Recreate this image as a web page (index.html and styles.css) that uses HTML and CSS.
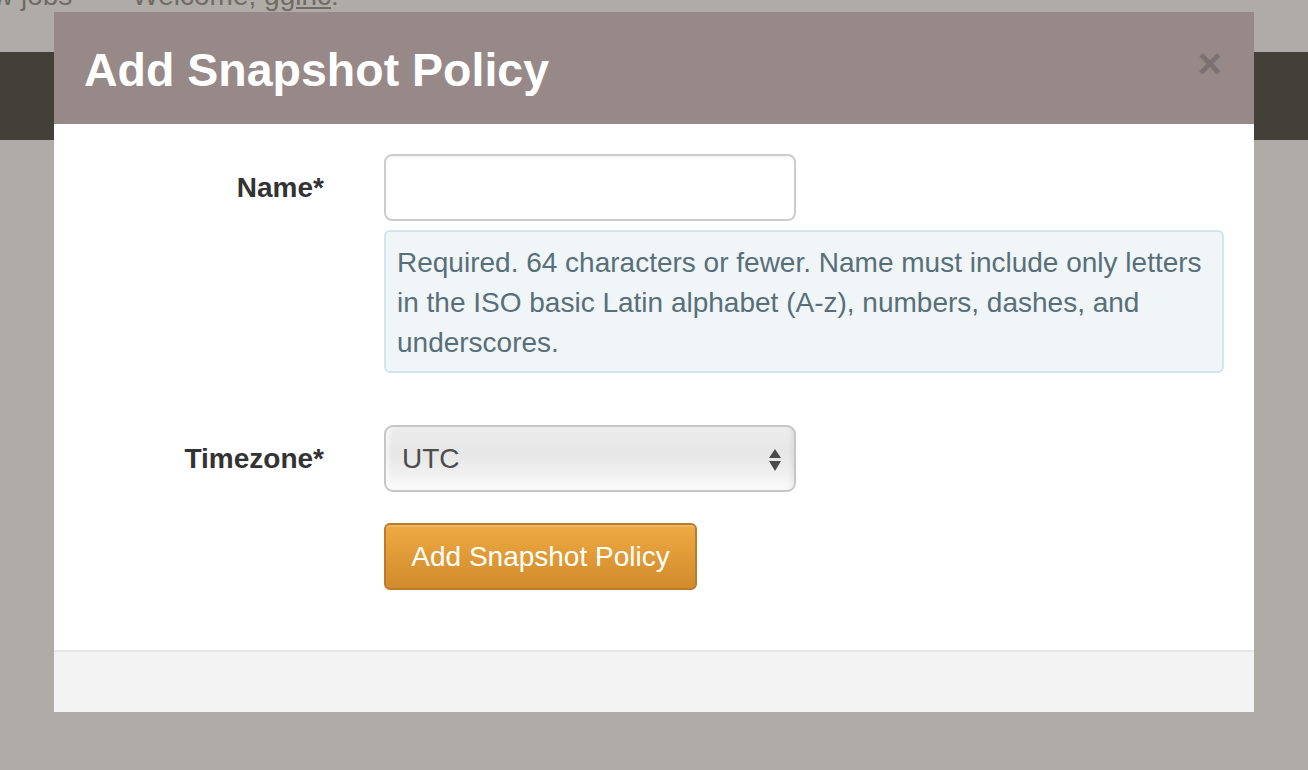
FILE: index.html
```html
<!DOCTYPE html>
<html>
<head>
<meta charset="utf-8">
<link rel="stylesheet" href="styles.css">
</head>
<body>
<div class="page">
  <div class="topline">
    <span class="jobs">View jobs</span>
    <span class="welcome">Welcome, <a class="user">gginc</a>!</span>
  </div>
  <div class="navbar"></div>
</div>
<div class="backdrop"></div>
<div class="modal">
  <div class="modal-header">
    <h3 class="modal-title">Add Snapshot Policy</h3>
    <span class="close">&times;</span>
  </div>
  <div class="modal-body">
    <div class="form-row">
      <label class="control-label">Name*</label>
      <div class="controls">
        <input class="text-input" type="text">
        <div class="help">Required. 64 characters or fewer. Name must include only letters in the ISO basic Latin alphabet (A-z), numbers, dashes, and underscores.</div>
      </div>
    </div>
    <div class="form-row tz-row">
      <label class="control-label">Timezone*</label>
      <div class="controls">
        <div class="select">
          <span class="select-value">UTC</span>
          <svg class="arrows" width="14" height="24" viewBox="0 0 14 24"><path d="M7 1 L13 10 L1 10 Z" fill="#4a4a4a"/><path d="M1 13 L13 13 L7 23 Z" fill="#4a4a4a"/></svg>
        </div>
        <button class="btn-add">Add Snapshot Policy</button>
      </div>
    </div>
  </div>
  <div class="modal-footer"></div>
</div>
</body>
</html>
```
FILE: styles.css
```css
html, body {
  margin: 0;
  padding: 0;
}
body {
  width: 1308px;
  height: 770px;
  overflow: hidden;
  background: #ffffff;
  font-family: "Liberation Sans", Arial, Helvetica, sans-serif;
  position: relative;
}
.page {
  height: 770px;
  background: #ffffff;
}
.topline {
  height: 70px;
  display: flex;
  font-size: 28px;
  line-height: 28px;
  color: #8c8882;
  margin-top: -18px;
  margin-left: -47px;
  white-space: nowrap;
}
.topline .jobs {
  margin-right: 60px;
}
.topline .user {
  color: #8c8882;
  text-decoration: underline;
}
.navbar {
  height: 88px;
  background: #383633;
}
.backdrop {
  position: absolute;
  inset: 0;
  background: rgba(80, 74, 66, 0.46);
}
.modal {
  position: absolute;
  left: 54px;
  top: 12px;
  width: 1200px;
  background: #ffffff;
}
.modal-header {
  height: 112px;
  background: #978988;
  display: flex;
  align-items: flex-start;
  justify-content: space-between;
  padding: 0 32px 0 30px;
  box-sizing: border-box;
}
.modal-title {
  margin: 0;
  margin-top: 28px;
  font-size: 46.5px;
  line-height: 60px;
  font-weight: bold;
  color: #ffffff;
}
.close {
  margin-top: 28px;
  font-size: 42px;
  line-height: 48px;
  font-weight: bold;
  color: #7c7171;
}
.modal-body {
  padding: 30px 30px 0 30px;
  height: 526px;
  box-sizing: border-box;
}
.form-row {
  display: flex;
}
.tz-row {
  margin-top: 52px;
}
.control-label {
  width: 240px;
  flex: none;
  text-align: right;
  font-size: 28px;
  font-weight: bold;
  color: #333333;
  line-height: 40px;
  padding-top: 14px;
  margin-right: 60px;
}
.controls {
  display: flex;
  flex-direction: column;
  align-items: flex-start;
  width: 840px;
}
.text-input {
  width: 412px;
  height: 67px;
  box-sizing: border-box;
  border: 2px solid #cccccc;
  border-radius: 8px;
  background: #ffffff;
  margin: 0;
  padding: 0 16px;
  font-size: 28px;
  box-shadow: inset 0 2px 2px rgba(0,0,0,0.04);
}
.help {
  margin-top: 9px;
  width: 840px;
  box-sizing: border-box;
  background: #f0f5f8;
  border: 2px solid #d3e5ec;
  border-radius: 6px;
  padding: 11px 6px 8px 11px;
  font-size: 28px;
  line-height: 40px;
  color: #586f79;
}
.select {
  width: 412px;
  height: 67px;
  box-sizing: border-box;
  border: 2px solid #c6c6c6;
  border-radius: 9px;
  background: linear-gradient(#ededed 0%, #e6e6e6 40%, #f0f0f0 75%, #fcfcfc 100%);
  box-shadow: inset 3px 0 4px rgba(255,255,255,0.6), inset -3px 0 4px rgba(0,0,0,0.05);
  display: flex;
  align-items: center;
  justify-content: space-between;
  padding: 0 12px 0 16px;
}
.select-value {
  font-size: 28px;
  color: #4d4d4d;
}
.arrows {
  display: block;
  margin-top: 2px;
}
.btn-add {
  margin-top: 31px;
  width: 313px;
  height: 67px;
  box-sizing: border-box;
  border: 2px solid #b97b2c;
  border-radius: 6px;
  background: linear-gradient(#eeab42, #d18a2c);
  color: #ffffff;
  font-family: "Liberation Sans", Arial, Helvetica, sans-serif;
  font-size: 28px;
  padding: 0;
  box-shadow: inset 0 2px 0 rgba(255,255,255,0.15);
}
.modal-footer {
  height: 62px;
  box-sizing: border-box;
  border-top: 2px solid #e6e6e6;
  background: #f3f3f3;
}
```
